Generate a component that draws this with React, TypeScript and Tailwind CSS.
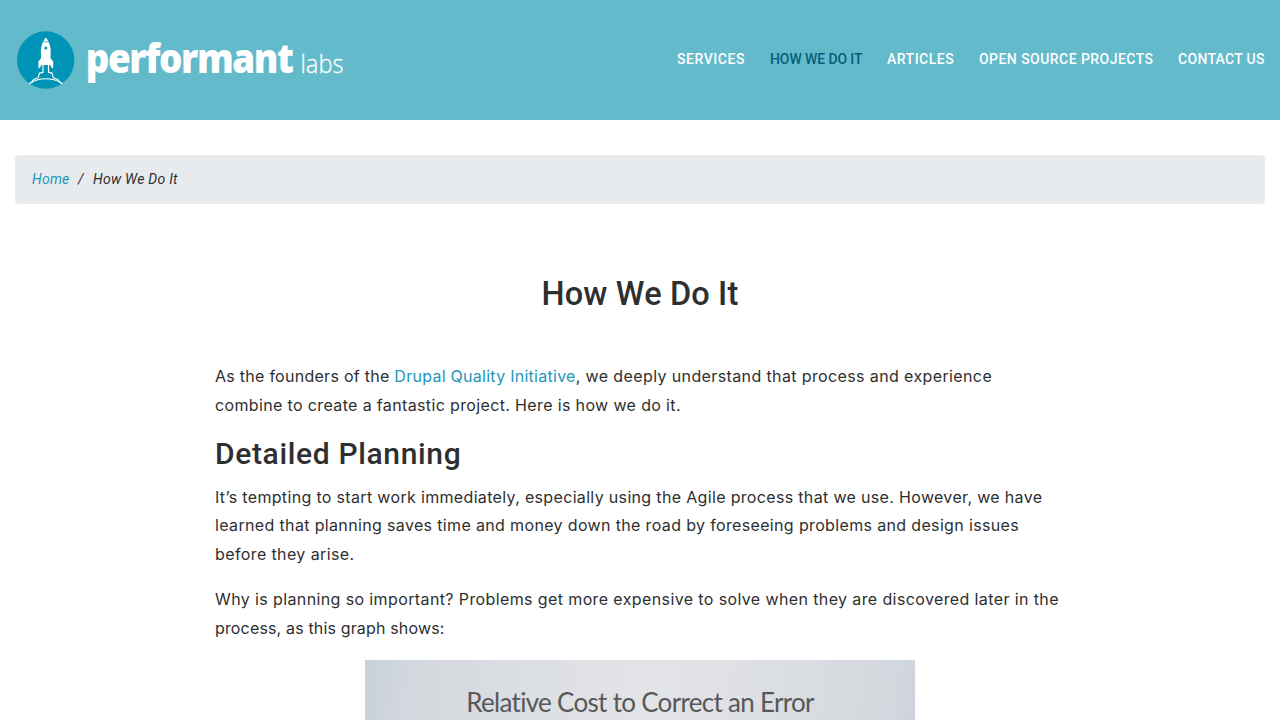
const nav = [
  { label: "SERVICES", cls: "text-white w-[68px] tracking-[0.56px]" },
  { label: "HOW WE DO IT", cls: "text-[#075e78] w-[92px] tracking-[-0.1px]" },
  { label: "ARTICLES", cls: "text-white w-[67px] tracking-[0.5px]" },
  { label: "OPEN SOURCE PROJECTS", cls: "text-white w-[174px] tracking-[0.45px]" },
  { label: "CONTACT US", cls: "text-white w-[87px] tracking-[0.3px]" },
];

function Logo() {
  return (
    <svg width="340" height="60" viewBox="0 0 340 60" className="block" role="img" aria-label="performant labs">
      <circle cx="29.700" cy="30" r="28.700" fill="#0095b7" />
      <path
        fill="#fff"
        d="M29.500 7.700q.3-.6.6 0l2.500 3.700h-5.600zM26.700 12.200h6.200c1.300 3.500 2 7 1.800 11l-.2 5 2.800 3.300-.2 7-1.900-1.500-1-2h-8.800l-1 2-1.900 1.500-.2-7 2.800-3.300-.2-5c-.2-4 .5-7.500 1.800-11z"
      />
      <circle cx="29.800" cy="18" r="1.500" fill="#0095b7" />
      <g fill="none" stroke="#fff" strokeWidth="1.200" strokeLinejoin="round">
        <path d="M27 35v7.300l-3.600.9-1.200 4.600-4.600 1.700-1.500 2.300-2.900 2" />
        <path d="M32.500 35v7.300l3.600.9 1.200 4.600 4.600 1.700 1.500 2.300 2.900 2" />
        <path d="M14.500 53c9-5.700 21.500-5.700 31 0" />
      </g>
      <g transform="scale(0.92 1)">
        <text x="75.700" y="42.500" fontFamily="Open Sans, sans-serif" fontWeight="800" fontSize="40" textLength="226.500" lengthAdjust="spacing" fill="#fff">performant</text>
      </g>
      <text x="284.500" y="42.500" fontFamily="Open Sans, sans-serif" fontWeight="300" fontSize="26" textLength="43" lengthAdjust="spacingAndGlyphs" fill="#fff" stroke="#fff" strokeWidth="0.300">labs</text>
    </svg>
  );
}

export default function App() {
  return (
    <div className="h-[720px] overflow-hidden bg-white font-['Inter',sans-serif] text-[#2e2f30]">
      <header className="flex h-[120px] items-center justify-between bg-[#62bacb] pr-[15px] pl-4">
        <Logo />
        <nav className="flex gap-[25px] pb-0.5 font-['Roboto',sans-serif] text-sm leading-5 font-medium">
          {nav.map((n) => (
            <a key={n.label} className={`block whitespace-nowrap ${n.cls}`}>
              {n.label}
            </a>
          ))}
        </nav>
      </header>

      <div className="mx-[15px] mt-[35px] flex h-[49px] items-center rounded-[4px] bg-[#e8ebee] pr-4 pb-0.5 pl-[17px] font-['Roboto',sans-serif] text-sm tracking-[0.25px] italic">
        <a className="w-[46px] text-[#1d96b7]">Home</a>
        <span className="w-[15px]">/</span>
        <span>How We Do It</span>
      </div>

      <main className="mx-auto w-[850px]">
        <h1 className="mt-[71px] text-center font-['Roboto',sans-serif] text-[32.5px] leading-[38px] font-medium tracking-[0.15px]">
          How We Do It
        </h1>
        <p className="mt-[49px] text-base leading-[28.8px] whitespace-nowrap">
          <span className="tracking-[0.27px]">
            As the founders of the <a className="text-[#1d96b7]">Drupal Quality Initiative</a>
          </span>
          <span className="tracking-[0.38px]">, we deeply understand that process and experience</span>
          <br />
          <span className="tracking-[0.36px]">combine to create a fantastic project. Here is how we do it.</span>
        </p>
        <h2 className="mt-4 font-['Roboto',sans-serif] text-[30px] leading-[36px] font-medium tracking-[0.65px]">
          Detailed Planning
        </h2>
        <p className="mt-[11px] text-base leading-[28.8px] whitespace-nowrap">
          <span className="tracking-[0.333px]">It’s tempting to start work immediately, especially using the Agile process that we use. However, we have</span>
          <br />
          <span className="tracking-[0.35px]">learned that planning saves time and money down the road by foreseeing problems and design issues</span>
          <br />
          <span className="tracking-[0.39px]">before they arise.</span>
        </p>
        <p className="mt-4 text-base leading-[28.8px] whitespace-nowrap">
          <span className="tracking-[0.385px]">Why is planning so important? Problems get more expensive to solve when they are discovered later in the</span>
          <br />
          <span className="tracking-[0.155px]">process, as this graph shows:</span>
        </p>
        <figure className="mx-auto mt-[17px] h-[320px] w-[550px] bg-[linear-gradient(95deg,#c8d0db_0%,#d3d8de_8%,#dadde2_25%,#e3e4e8_50%,#dadde2_75%,#d3d8de_92%,#c5ced9_100%)] pt-[24px] text-center font-['Lato',sans-serif] text-[26px] leading-[36px] tracking-[-0.7px] text-[#575859]">
          Relative Cost to Correct an Error
        </figure>
      </main>
    </div>
  );
}
